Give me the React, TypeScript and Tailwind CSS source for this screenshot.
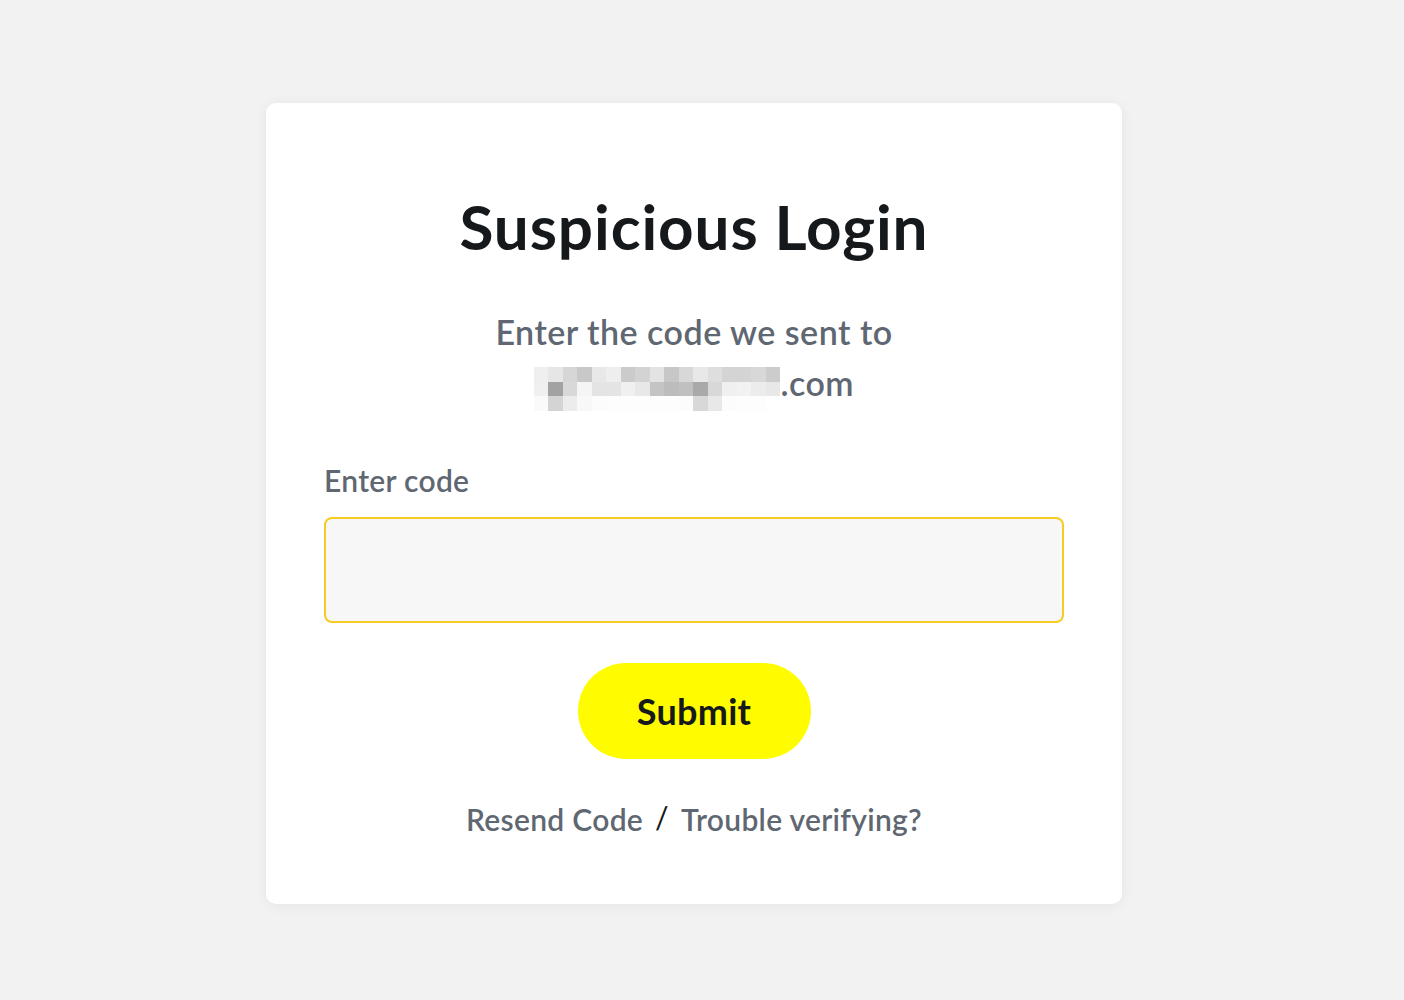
import * as React from "react";

// pixelated (blurred) email prefix, three rows of grey squares
const pixelRows: string[][] = [
  ["#efefef", "#e6e6e6", "#d6d6d6", "#c8c8c8", "#e8e8e8", "#eeeeee", "#cbcbcb", "#d3d3d3", "#e3e3e3", "#c7c7c7", "#d8d8d8", "#e8e8e8", "#dedede", "#d4d4d4", "#d4d4d4", "#d8d8d8", "#cccccc"],
  ["#f0f0f0", "#a2a2a2", "#d8d8d8", "#f5f5f5", "#e4e4e4", "#e4e4e4", "#f0f0f0", "#e8e8e8", "#c4c4c4", "#bcbcbc", "#c0c0c0", "#a9a9a9", "#d8d8d8", "#f0f0f0", "#f2f2f2", "#ececec", "#e8e8e8"],
  ["#fafafa", "#d4d4d4", "#ececec", "#f8f8f8", "#fcfcfc", "#fdfdfd", "#fdfdfd", "#fdfdfd", "#fdfdfd", "#fdfdfd", "#fcfcfc", "#d8d8d8", "#e8e8e8", "#fcfcfc", "#fdfdfd", "#fdfdfd", "#ffffff"],
];

function BlurredEmail() {
  return (
    <div className="grid grid-cols-[repeat(17,14.5px)] grid-rows-[repeat(3,14.5px)] translate-y-[10px]">
      {pixelRows.flatMap((row, r) =>
        row.map((c, i) => <div key={r + "-" + i} style={{ backgroundColor: c }} />)
      )}
    </div>
  );
}

export default function App() {
  const [code, setCode] = React.useState("");

  return (
    <div className="min-h-screen bg-[#f2f2f2] pt-[103px] font-['Lato','Noto_Sans',sans-serif]">
      <div className="w-[856px] ml-[266px] bg-white rounded-[10px] shadow-[0_2px_14px_rgba(0,0,0,0.06)] px-[58px] pt-[88px] pb-[67px] flex flex-col">
        <h1 className="text-[62px] leading-[70px] font-bold text-center text-[#16191c] tracking-[0.9px]">
          Suspicious Login
        </h1>

        <div className="mt-[45px] text-[34px] leading-[51px] text-[#5f6772] text-center font-semibold tracking-[0.5px]">
          <div>Enter the code we sent to</div>
          <div className="flex justify-center items-start">
            <BlurredEmail />
            <span>.com</span>
          </div>
        </div>

        <label className="mt-[54px] text-[30px] leading-[36px] text-[#5f6772] font-semibold tracking-[0.3px]">
          Enter code
        </label>
        <input
          value={code}
          onChange={(e) => setCode(e.target.value)}
          className="mt-[19px] h-[106px] w-full rounded-[8px] border-2 border-[#f6cb24] bg-[#f7f7f7] px-5 text-[28px] outline-none"
        />

        <button className="mt-[40px] mx-auto h-[96px] w-[233px] rounded-full bg-[#fffc00] text-[36px] font-bold text-[#16191c] tracking-[0.3px]">
          Submit
        </button>

        <div className="mt-[42px] flex justify-center items-center gap-[12px] text-[30px] leading-[36px] text-[#5f6772] font-semibold tracking-[0.3px]">
          <a href="#">Resend Code</a>
          <span className="text-[#16191c] text-[30px] font-normal -translate-y-[2px]">/</span>
          <a href="#">Trouble verifying?</a>
        </div>
      </div>
    </div>
  );
}
